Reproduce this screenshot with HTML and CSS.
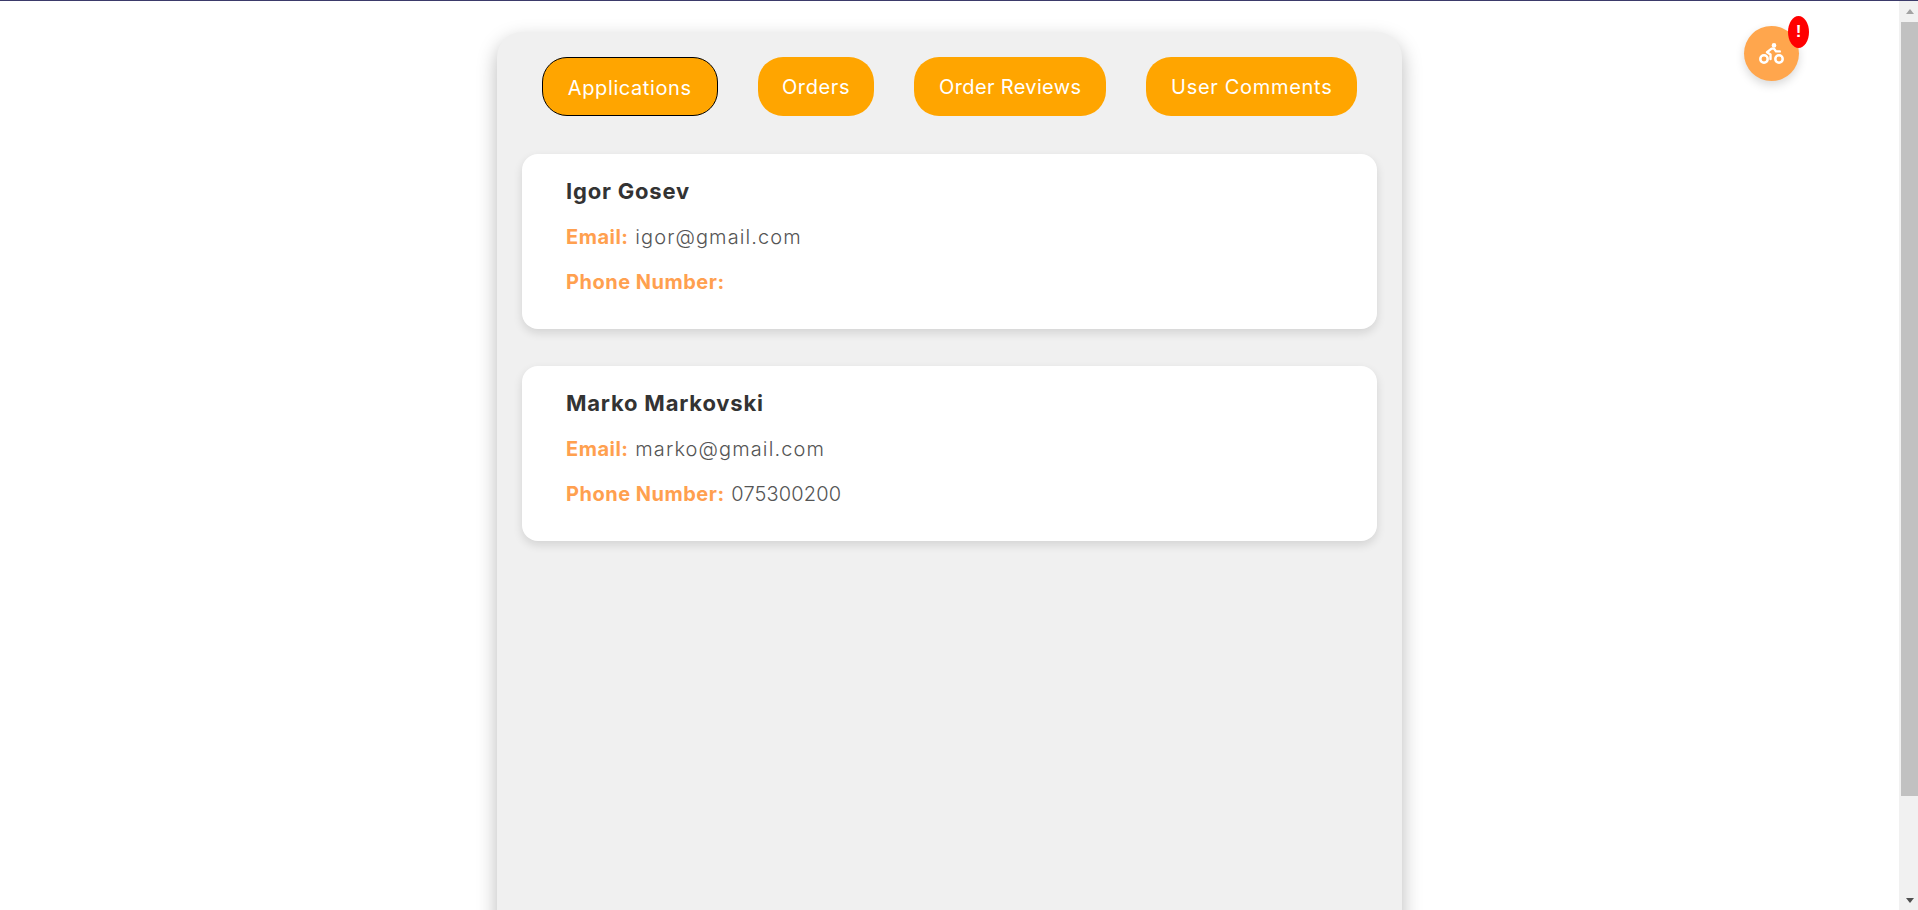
FILE: index.html
```html
<!DOCTYPE html>
<html lang="en">
<head>
    <meta charset="UTF-8">
    <meta name="viewport" content="width=device-width, initial-scale=1.0">
    <title>Applications</title>
    <link rel="stylesheet" href="styles.css">
</head>
<body>
    <div class="top-line"></div>
    <div class="page">
        <main class="main">
            <div class="panel">
                <div class="tabs">
                    <button class="tab tab-applications active">Applications</button>
                    <button class="tab tab-orders">Orders</button>
                    <button class="tab tab-reviews">Order Reviews</button>
                    <button class="tab tab-comments">User Comments</button>
                </div>
                <div class="card">
                    <h3>Igor Gosev</h3>
                    <p><strong>Email:</strong> igor@gmail.com</p>
                    <p><strong>Phone Number:</strong></p>
                </div>
                <div class="card">
                    <h3>Marko Markovski</h3>
                    <p><strong>Email:</strong> marko@gmail.com</p>
                    <p><strong>Phone Number:</strong> <span class="phone">075300200</span></p>
                </div>
            </div>
            <button class="fab">
                <svg width="25" height="21" viewBox="0 0 25 21" fill="none">
                    <circle cx="15" cy="2.4" r="2.3" fill="#fff"/>
                    <circle cx="5" cy="16" r="3.7" stroke="#fff" stroke-width="2.5"/>
                    <circle cx="20" cy="16" r="3.7" stroke="#fff" stroke-width="2.5"/>
                    <path d="M11.5 16V11.6L8 9.2L12.6 5.6H15L17 8.4H20.8" stroke="#fff" stroke-width="2.4" stroke-linecap="round" stroke-linejoin="round"/>
                </svg>
                <span class="badge">!</span>
            </button>
        </main>
        <div class="scrollbar">
            <div class="arrow-up"></div>
            <div class="thumb"></div>
            <div class="arrow-down"></div>
        </div>
    </div>
</body>
</html>
```

FILE: styles.css
```css
*{
    box-sizing: border-box;
}
html, body{
    height: 100%;
    margin: 0;
    overflow: hidden;
}
body{
    font-family: 'Inter', 'Open Sans', sans-serif;
    background: #fff;
    display: flex;
    flex-direction: column;
}
.top-line{
    height: 1px;
    flex: none;
    background: #3b3a6a;
}
.page{
    display: flex;
    flex: 1;
    min-height: 0;
}
.main{
    flex: 1;
    position: relative;
    display: flex;
    justify-content: center;
    overflow: hidden;
}
.panel{
    width: 905px;
    height: 1000px;
    flex: none;
    margin-top: 31px;
    padding: 25px;
    background: #f0f0f0;
    border-radius: 25px;
    box-shadow: 0 8px 20px rgba(0, 0, 0, 0.28);
}
.tabs{
    display: flex;
    justify-content: center;
    gap: 40px;
    margin-bottom: 38px;
}
.tab{
    height: 59px;
    padding: 0;
    border: none;
    border-radius: 25px;
    background: #ffa500;
    color: #fff;
    font-family: inherit;
    font-size: 20px;
    letter-spacing: 0.6px;
    cursor: pointer;
}
.tab-applications{ width: 176px; }
.tab-orders{ width: 116.5px; }
.tab-reviews{ width: 192px; letter-spacing: 0.35px; }
.tab-comments{ width: 211px; letter-spacing: 0.7px; }
.tab.active{
    border: 1px solid #000;
    padding-top: 2px;
}
.card{
    height: 175px;
    margin-bottom: 37px;
    padding: 22px 44px;
    background: #fff;
    border-radius: 16px;
    box-shadow: 0 4px 10px rgba(0, 0, 0, 0.12);
}
.card h3{
    margin: 0 0 16px;
    height: 30px;
    line-height: 30px;
    font-size: 22px;
    font-weight: 700;
    letter-spacing: 0.8px;
    color: #333;
}
.card p{
    margin: 0 0 15px;
    height: 30px;
    line-height: 31px;
    font-size: 20px;
    font-weight: 300;
    letter-spacing: 1.1px;
    color: #555;
}
.card strong{
    font-weight: 700;
    letter-spacing: 0.5px;
    color: #ffa04f;
}
.phone{
    letter-spacing: 0.15px;
}
.fab{
    position: absolute;
    left: 1744px;
    top: 25px;
    width: 55px;
    height: 55px;
    padding: 0;
    border: none;
    border-radius: 50%;
    background: #ffa64d;
    box-shadow: 0 4px 10px rgba(0, 0, 0, 0.15);
    display: flex;
    justify-content: center;
    align-items: center;
    cursor: pointer;
}
.badge{
    position: absolute;
    left: 44px;
    top: -10px;
    width: 21px;
    height: 32px;
    border-radius: 50%;
    background: #f00;
    color: #fff;
    font-size: 17px;
    font-weight: 900;
    line-height: 32px;
    text-align: center;
}
.scrollbar{
    width: 19px;
    flex: none;
    background: #f1f1f1;
    display: flex;
    flex-direction: column;
    align-items: flex-end;
}
.thumb{
    width: 17px;
    height: 774px;
    background: #c1c1c1;
}
.arrow-up, .arrow-down{
    width: 0;
    height: 0;
    margin-right: 4px;
    border-left: 4.5px solid transparent;
    border-right: 4.5px solid transparent;
}
.arrow-up{
    margin-top: 8px;
    margin-bottom: 8px;
    border-bottom: 5px solid #a3a3a3;
}
.arrow-down{
    margin-top: 102px;
    border-top: 5px solid #505050;
}
```
